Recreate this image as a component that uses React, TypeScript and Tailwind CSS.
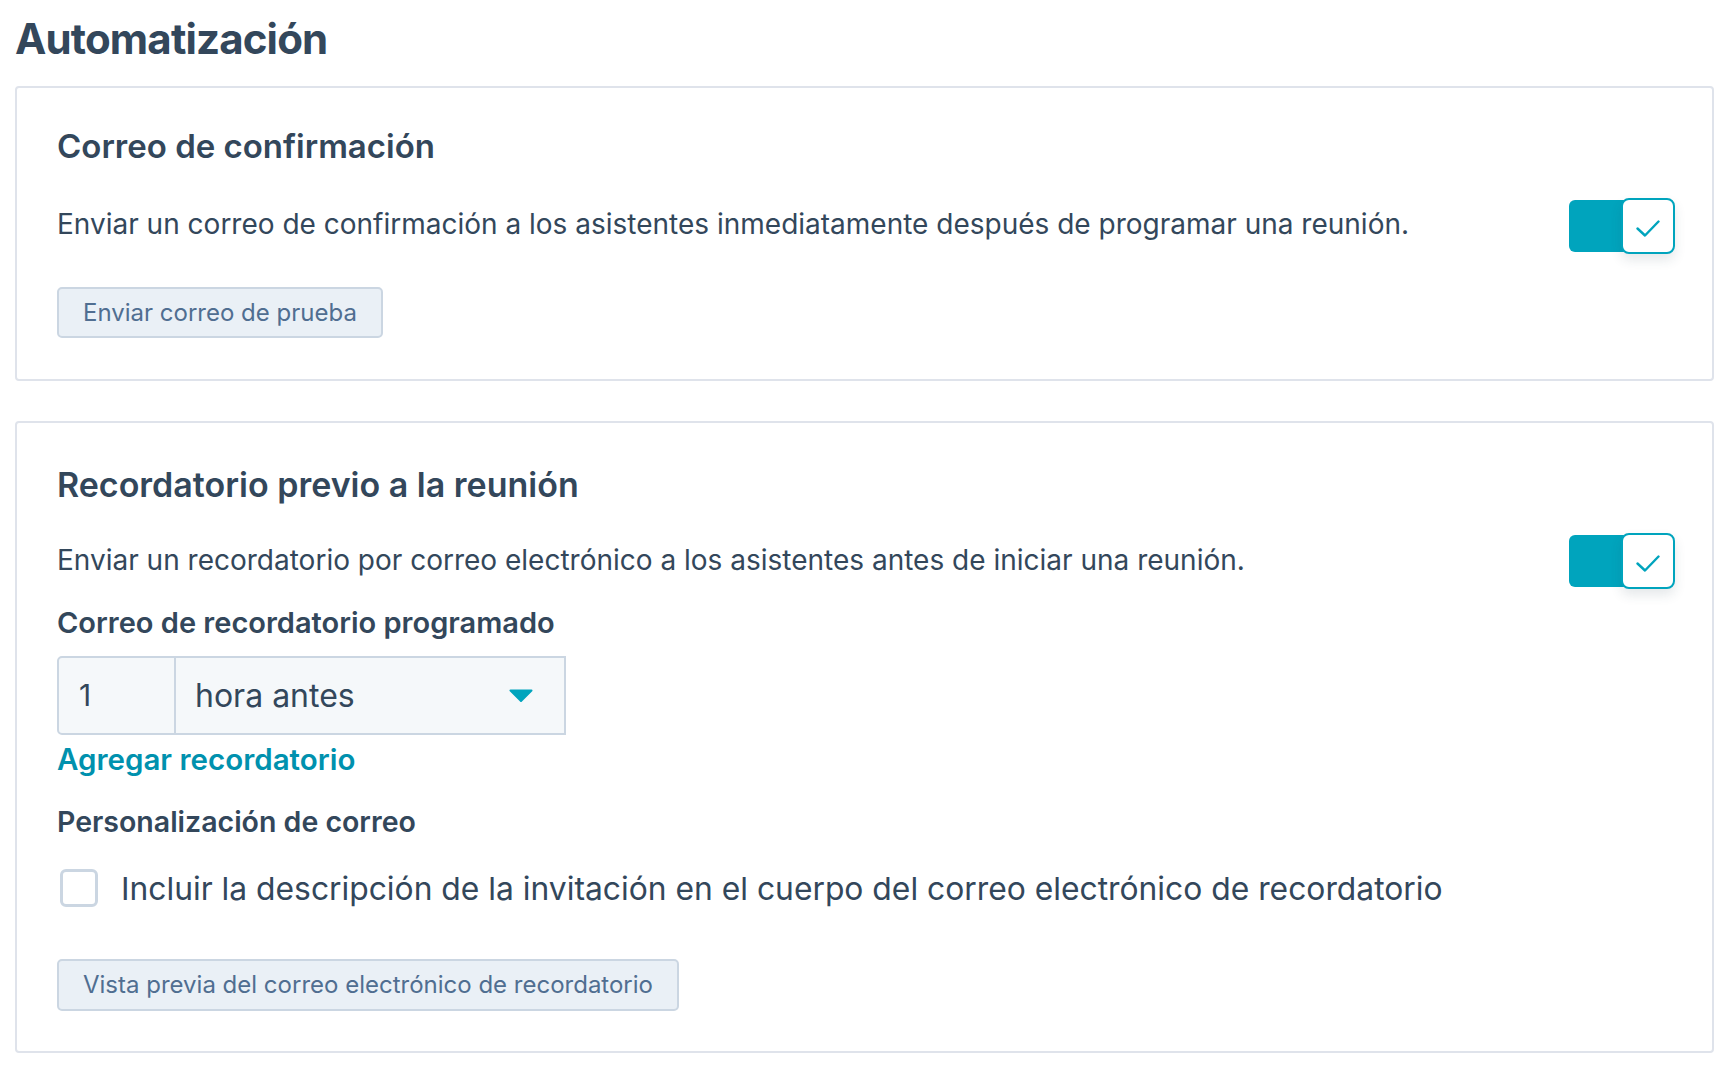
function CheckMark() {
  return (
    <svg width="24" height="17" viewBox="0 0 24 17" fill="none">
      <path d="M1.5 8.5L9 15.5L22.5 1.5" stroke="#00a4bd" strokeWidth="2.4" strokeLinecap="round" strokeLinejoin="round" />
    </svg>
  );
}

function Toggle() {
  return (
    <div className="relative -mr-[3px] flex h-[56px] w-[106px] shrink-0 items-center">
      <div className="h-[52px] w-[60px] rounded-[6px] bg-[#00a4bd]" />
      <div className="absolute right-0 top-0 flex h-[56px] w-[54px] items-center justify-center rounded-[8px] border-2 border-[#00a4bd] bg-white pt-[4px] shadow-[0_6px_12px_rgba(45,62,80,0.12)]">
        <CheckMark />
      </div>
    </div>
  );
}

function SecondaryButton({ label, height }: { label: string; height: string }) {
  return (
    <button className={`flex ${height} items-center rounded-[5px] border-2 border-[#cbd6e2] bg-[#eaf0f6] px-[24px] text-[24px] text-[#506e91]`}>
      {label}
    </button>
  );
}

export default function App() {
  return (
    <div className="min-h-screen bg-white pl-[15px] pr-[10px] text-[#33475b] [font-family:Inter,'Noto_Sans',sans-serif]">
      <h1 className="flex h-[86px] items-start pt-[13px] text-[42px] leading-[52px] font-bold tracking-[-0.02em]">
        Automatización
      </h1>

      <section className="rounded-[4px] border-2 border-[#dfe3eb] px-[40px] pt-[30px] pb-[41px]">
        <h2 className="flex h-[58px] items-center text-[33px] font-semibold">Correo de confirmación</h2>
        <div className="mt-[22px] flex h-[56px] items-center justify-between">
          <p className="-mt-[4px] text-[28px]">
            Enviar un correo de confirmación a los asistentes inmediatamente después de programar una reunión.
          </p>
          <Toggle />
        </div>
        <div className="mt-[33px] flex">
          <SecondaryButton label="Enviar correo de prueba" height="h-[51px]" />
        </div>
      </section>

      <section className="mt-[40px] rounded-[4px] border-2 border-[#dfe3eb] px-[40px] pt-[32px] pb-[40px]">
        <h2 className="flex h-[58px] items-center text-[34px] font-semibold">Recordatorio previo a la reunión</h2>
        <div className="mt-[20px] flex h-[56px] items-center justify-between">
          <p className="-mt-[3px] text-[28px]">
            Enviar un recordatorio por correo electrónico a los asistentes antes de iniciar una reunión.
          </p>
          <Toggle />
        </div>

        <div className="mt-[14px] flex h-[40px] items-center text-[29px] font-semibold">
          Correo de recordatorio programado
        </div>

        <div className="mt-[13px] flex h-[79px] w-[509px] rounded-l-[5px] border-2 border-[#cbd6e2] bg-[#f5f8fa]">
          <div className="flex w-[117px] items-center border-r-2 border-[#cbd6e2] pl-[20px] text-[30px]">1</div>
          <div className="flex flex-1 items-center justify-between pl-[19px] pr-[31px] text-[32px]">
            <span>hora antes</span>
            <svg width="24" height="13" viewBox="0 0 24 13">
              <path d="M1.5 1.5h21L12 12z" fill="#00a4bd" stroke="#00a4bd" strokeWidth="2" strokeLinejoin="round" />
            </svg>
          </div>
        </div>

        <div className="mt-[6px] flex h-[36px] items-center text-[29.5px] font-semibold text-[#0091ae]">
          Agregar recordatorio
        </div>

        <div className="mt-[25px] flex h-[40px] items-center text-[28.5px] font-semibold">
          Personalización de correo
        </div>

        <label className="mt-[24px] flex h-[43px] items-center">
          <span className="ml-[3px] h-[38px] w-[38px] shrink-0 rounded-[6px] border-[3px] border-[#cbd6e2] bg-white" />
          <span className="ml-[23px] pt-[3px] text-[31.8px]">
            Incluir la descripción de la invitación en el cuerpo del correo electrónico de recordatorio
          </span>
        </label>

        <div className="mt-[50px] flex">
          <SecondaryButton label="Vista previa del correo electrónico de recordatorio" height="h-[52px]" />
        </div>
      </section>
    </div>
  );
}
